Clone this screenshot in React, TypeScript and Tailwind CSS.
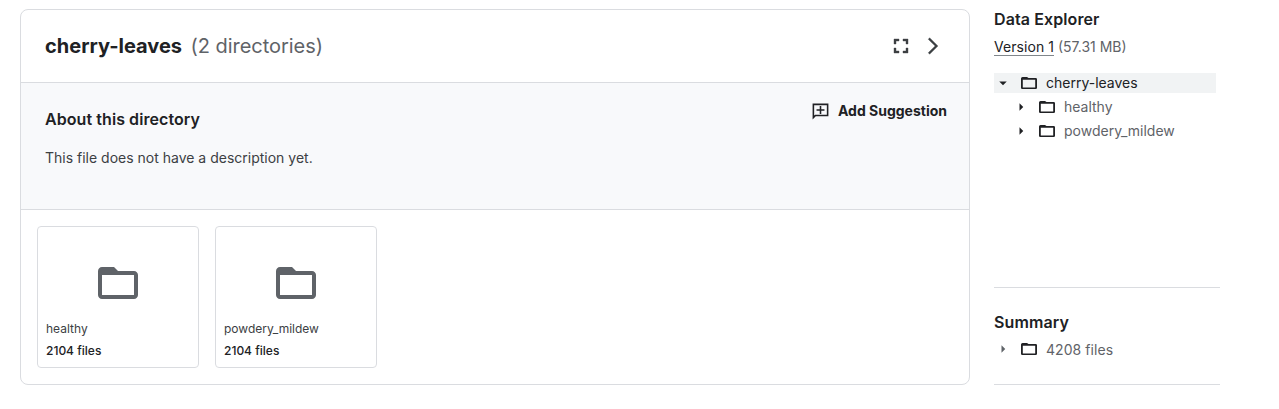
import React from "react";

const FOLDER =
  "M20 6h-8l-2-2H4c-1.1 0-1.99.9-1.99 2L2 18c0 1.1.9 2 2 2h16c1.1 0 2-.9 2-2V8c0-1.1-.9-2-2-2zm0 12H4V8h16v10z";
const FULLSCREEN =
  "M7 14H5v5h5v-2H7v-3zm-2-4h2V7h3V5H5v5zm12 7h-3v2h5v-5h-2v3zM14 5v2h3v3h2V5h-5z";
const CHEVRON = "M6.23 20.23L8 22l10-10L8 2 6.23 3.77 14.46 12z";
const ADD_COMMENT =
  "M22 2H2v20l4-4h16V2zm-2 14H5.17L4 17.17V4h16v12zM11 5h2v4h4v2h-4v4h-2v-4H7V9h4z";
const ARROW_DOWN = "M7 10l5 5 5-5z";
const ARROW_RIGHT = "M10 17l5-5-5-5z";

function Icon({ d, className }: { d: string; className: string }) {
  return (
    <svg viewBox="0 0 24 24" fill="currentColor" className={`shrink-0 ${className}`} aria-hidden="true">
      <path d={d} />
    </svg>
  );
}

function SmallFolder() {
  return (
    <svg viewBox="0 0 16 12" fill="currentColor" className="ml-[9px] h-3 w-4 shrink-0 text-[#202124]" aria-hidden="true">
      <path
        fillRule="evenodd"
        d="M1.5 0H6l1.5 1H14.7Q16 1 16 2.3V10.7Q16 12 14.7 12H1.3Q0 12 0 10.7V1.5Q0 0 1.5 0ZM1.8 2.8V10.4H14.2V2.8Z"
      />
    </svg>
  );
}

function Tile({ name, count }: { name: string; count: string }) {
  return (
    <article className="flex h-[142px] w-[162px] flex-col rounded-[4px] border border-[#dadce0] px-2 pt-8 text-xs">
      <Icon d={FOLDER} className="size-12 self-center text-[#5f6368]" />
      <p className="mt-[13px] leading-[18px] text-[#3c4043]">{name}</p>
      <p className="mt-1 leading-[18px] font-medium text-[#202124]">{count}</p>
    </article>
  );
}

function TreeRow({
  label,
  open = false,
  className,
  arrowClassName = "text-[#202124]",
  labelClassName = "",
}: {
  label: string;
  open?: boolean;
  className: string;
  arrowClassName?: string;
  labelClassName?: string;
}) {
  return (
    <div className={`flex h-5 w-[222px] items-center text-sm leading-5 ${className}`}>
      <Icon d={open ? ARROW_DOWN : ARROW_RIGHT} className={`size-[18px] ${arrowClassName}`} />
      <SmallFolder />
      <span className={`ml-[9px] ${labelClassName}`}>{label}</span>
    </div>
  );
}

export default function App() {
  return (
    <div className="flex h-[409px] w-[1279px] bg-white pt-[9px] pl-5 font-['Inter',sans-serif] text-[#202124]">
      <main className="h-[376px] w-[950px] overflow-hidden rounded-lg border border-[#dadce0]">
        <header className="flex h-[73px] items-center border-b border-[#dadce0] pr-[26px] pl-6">
          <h1 className="text-xl leading-6 font-bold">cherry-leaves</h1>
          <span className="ml-[8.5px] text-xl leading-6 tracking-[-0.04px] text-[#5f6368]">(2 directories)</span>
          <Icon d={FULLSCREEN} className="ml-auto size-6 stroke-current stroke-[0.4] text-[#3c4043]" />
          <Icon d={CHEVRON} className="ml-[10px] size-5 stroke-current stroke-[0.3] text-[#3c4043]" />
        </header>
        <section className="flex h-[127px] justify-between border-b border-[#dadce0] bg-[#f8f9fb] pr-[22px] pl-6">
          <div className="pt-6">
            <h2 className="text-base leading-6 font-semibold tracking-[0.07px]">About this directory</h2>
            <p className="mt-[17px] text-sm leading-5 text-[#3c4043]">This file does not have a description yet.</p>
          </div>
          <button className="mt-[18px] flex h-5 items-center gap-2 text-sm font-bold">
            <Icon d={ADD_COMMENT} className="size-[19px]" />
            Add Suggestion
          </button>
        </section>
        <div className="flex gap-4 p-4">
          <Tile name="healthy" count="2104 files" />
          <Tile name="powdery_mildew" count="2104 files" />
        </div>
      </main>
      <aside className="ml-6 w-[226px]">
        <section className="h-[279px] border-b border-[#dadce0]">
          <h2 className="text-base leading-5 font-semibold tracking-[0.1px]">Data Explorer</h2>
          <p className="mt-[9px] flex gap-1 text-sm leading-[17px] text-[#5f6368]">
            <span className="border-b border-[#80868b] tracking-[0.06px] text-[#202124]">Version 1</span>
            <span>(57.31 MB)</span>
          </p>
          <TreeRow label="cherry-leaves" open className="mt-[17px] bg-[#f1f3f4]" />
          <TreeRow label="healthy" className="mt-1 pl-[18px] text-[#5f6368]" />
          <TreeRow label="powdery_mildew" className="mt-1 pl-[18px] text-[#5f6368]" />
        </section>
        <section className="h-[97px] border-b border-[#dadce0] pt-6">
          <h2 className="text-base leading-5 font-semibold tracking-[0.1px]">Summary</h2>
          <TreeRow
            label="4208 files"
            className="mt-[7px] text-[#5f6368]"
            arrowClassName="text-[#5f6368]"
            labelClassName="mt-0.5 tracking-[0.06px]"
          />
        </section>
      </aside>
    </div>
  );
}
